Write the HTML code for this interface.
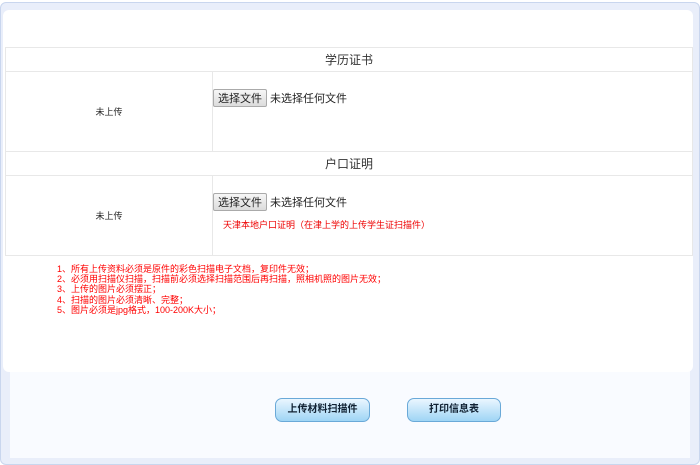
<!DOCTYPE html>
<html><head><meta charset="utf-8"><style>
body{margin:0;width:700px;height:465px;background:#fff;font-family:"Liberation Sans","Noto Sans CJK SC",sans-serif;position:relative;overflow:hidden}
.outer{position:absolute;left:0;top:2px;width:698px;height:461px;background:#e9eefa;border:1px solid #c9d6ee;border-radius:6px}
.low{position:absolute;left:10px;top:370px;width:680px;height:88px;background:#f9fbff}
.panel{position:absolute;left:3px;top:10px;width:690px;height:362px;background:#fff;border-radius:6px}
table{position:absolute;left:5px;top:47px;width:688px;border-collapse:collapse;font-size:12px}
td{border:1px solid #e8e8e8;padding:0}
.h{height:23px;text-align:center;font-size:12px;color:#333}
.l{width:206px;text-align:center;font-size:9px;color:#222}
.r{height:79px;vertical-align:top;font-size:11px;color:#222}
.fb{display:inline-block;border:1px solid #aaa;background:linear-gradient(#f6f6f6,#dcdcdc);padding:0 4px;font-size:11px;border-radius:2px}
.notes{position:absolute;left:57px;top:264px;color:#f00;font-size:9px;line-height:10.2px}
.btn{position:absolute;top:398px;height:22px;border:1px solid #6aa9d8;border-radius:7px;background:linear-gradient(#eaf6ff,#9fd5f5);color:#123;font-size:10px;font-weight:bold;text-align:center;line-height:22px}
</style></head><body>
<div class="outer"></div>
<div class="low"></div>
<div class="panel"></div>
<table>
<tr><td colspan="2" class="h">学历证书</td></tr>
<tr><td class="l">未上传</td><td class="r"><div style="margin:17px 0 0 0"><span class="fb">选择文件</span> 未选择任何文件</div></td></tr>
<tr><td colspan="2" class="h">户口证明</td></tr>
<tr><td class="l">未上传</td><td class="r"><div style="margin:17px 0 0 0"><span class="fb">选择文件</span> 未选择任何文件</div><div style="color:#e00;font-size:9px;margin:7px 0 0 10px">天津本地户口证明（在津上学的上传学生证扫描件）</div></td></tr>
</table>
<div class="notes">1、所有上传资料必须是原件的彩色扫描电子文档，复印件无效；<br>2、必须用扫描仪扫描，扫描前必须选择扫描范围后再扫描，照相机照的图片无效；<br>3、上传的图片必须摆正；<br>4、扫描的图片必须清晰、完整；<br>5、图片必须是jpg格式，100-200K大小；</div>
<div class="btn" style="left:275px;width:93px">上传材料扫描件</div>
<div class="btn" style="left:407px;width:92px">打印信息表</div>
</body></html>
